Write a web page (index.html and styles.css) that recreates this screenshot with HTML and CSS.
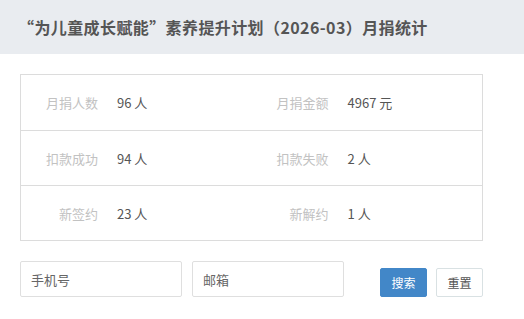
FILE: index.html
```html
<!DOCTYPE html>
<html lang="zh-CN">
<head>
    <meta charset="UTF-8">
    <meta name="viewport" content="width=device-width, initial-scale=1.0">
    <title>月捐统计</title>
    <link rel="stylesheet" href="styles.css">
</head>
<body>
    <header class="page-head">
        <h1>“为儿童成长赋能”素养提升计划（2026-03）月捐统计</h1>
    </header>
    <main class="content">
        <div class="stats">
            <div class="stat-row">
                <span class="label">月捐人数</span><span class="value">96 人</span>
                <span class="label">月捐金额</span><span class="value">4967 元</span>
            </div>
            <div class="stat-row">
                <span class="label">扣款成功</span><span class="value">94 人</span>
                <span class="label">扣款失败</span><span class="value">2 人</span>
            </div>
            <div class="stat-row">
                <span class="label">新签约</span><span class="value">23 人</span>
                <span class="label">新解约</span><span class="value">1 人</span>
            </div>
        </div>
        <form class="filter">
            <input type="text" class="field phone" placeholder="手机号">
            <input type="text" class="field email" placeholder="邮箱">
            <button type="submit" class="btn btn-primary">搜索</button>
            <button type="reset" class="btn btn-default">重置</button>
        </form>
    </main>
</body>
</html>
```

FILE: styles.css
```css
* {
    margin: 0;
    padding: 0;
    box-sizing: border-box;
}
body {
    font-family: "Noto Sans CJK SC", "Liberation Sans", sans-serif;
    background: #fff;
    color: #555;
}
.page-head {
    background-color: #e9ecf0;
    height: 54px;
    padding: 0 18px;
    display: flex;
    align-items: center;
}
.page-head h1 {
    font-size: 16px;
    font-weight: bold;
    color: #555;
    letter-spacing: 0.4px;
}
.content {
    padding: 20px 20px 0;
}
.stats {
    width: 463px;
    border: 1px solid #dcdcdc;
}
.stat-row {
    display: grid;
    grid-template-columns: 77px 1fr 77px 1fr;
    align-items: center;
    height: 55px;
    font-size: 13px;
}
.stat-row + .stat-row {
    border-top: 1px solid #dcdcdc;
}
.label {
    text-align: right;
    color: #c2c2c2;
}
.value {
    padding-left: 19px;
    color: #555;
}
.filter {
    display: flex;
    align-items: flex-end;
    margin-top: 20px;
}
.field {
    height: 36px;
    border: 1px solid #dfdfdf;
    border-radius: 2px;
    padding: 0 10px;
    font-family: inherit;
    font-size: 13px;
    color: #555;
    outline: none;
}
.field::placeholder {
    color: #666;
}
.phone {
    width: 162px;
}
.email {
    width: 152px;
    margin-left: 10px;
}
.btn {
    width: 47px;
    height: 29px;
    border-radius: 2px;
    font-family: inherit;
    font-size: 12px;
    cursor: pointer;
}
.btn-primary {
    margin-left: 36px;
    background-color: #4287c8;
    border: 1px solid #4287c8;
    color: #fff;
}
.btn-default {
    margin-left: 9px;
    background-color: #fff;
    border: 1px solid #d9e1e3;
    color: #555;
}
```
